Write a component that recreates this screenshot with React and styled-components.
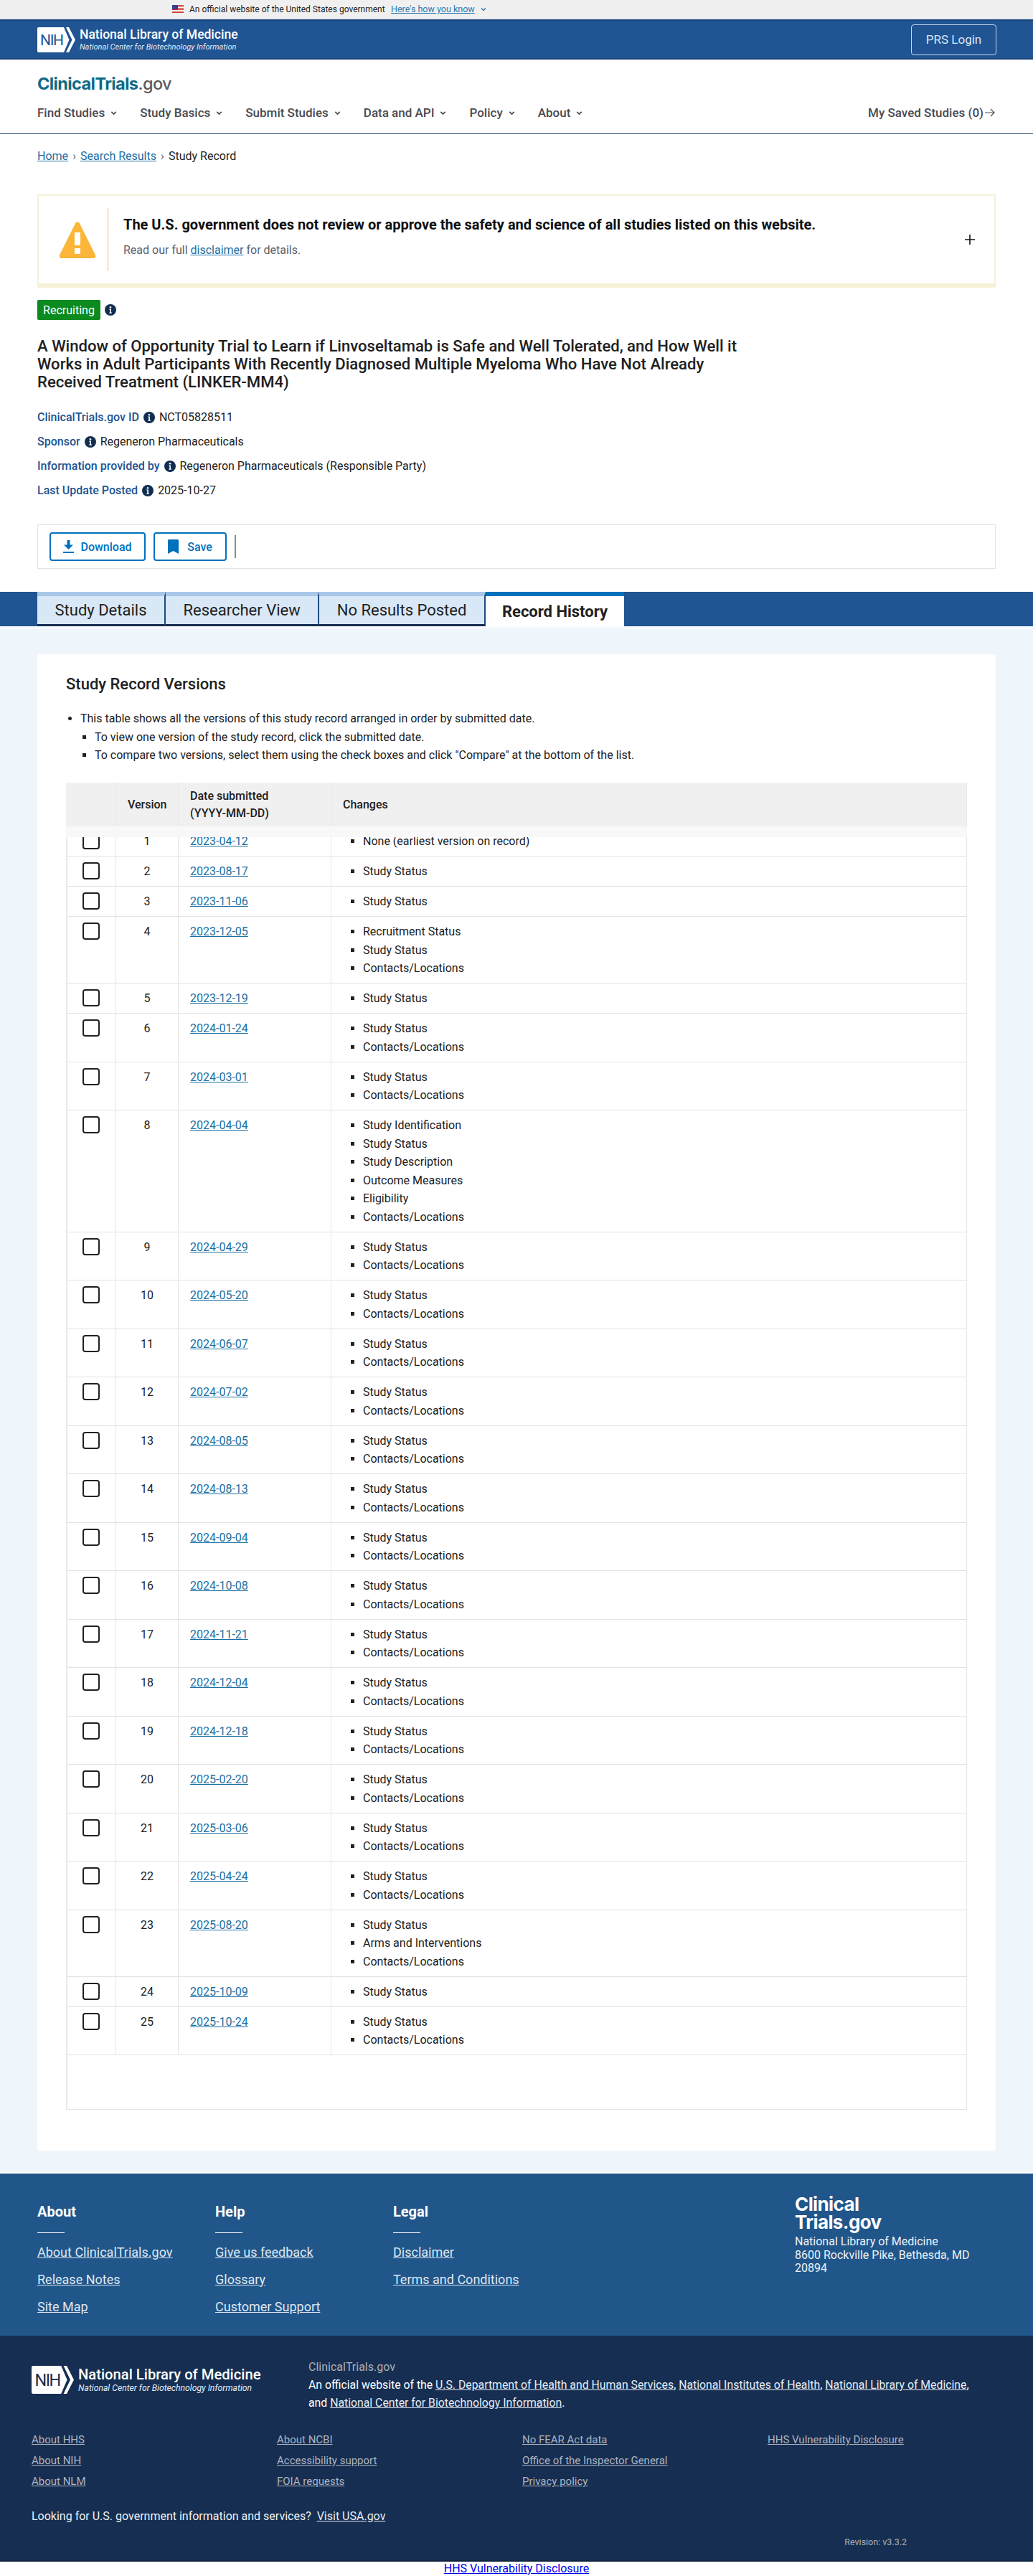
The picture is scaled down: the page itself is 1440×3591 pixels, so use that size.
import styled, { createGlobalStyle } from "styled-components";

const GlobalStyle = createGlobalStyle`
  html, body {
    margin: 0;
    padding: 0;
    background: #fff;
    color: #212121;
    font-family: Roboto, "Liberation Sans", sans-serif;
    font-size: 16px;
  }
  * { box-sizing: border-box; }
`;

const S = "Study Status";
const C = "Contacts/Locations";

const versions = [
  ["2023-04-12", ["None (earliest version on record)"]],
  ["2023-08-17", [S]],
  ["2023-11-06", [S]],
  ["2023-12-05", ["Recruitment Status", S, C]],
  ["2023-12-19", [S]],
  ["2024-01-24", [S, C]],
  ["2024-03-01", [S, C]],
  ["2024-04-04", ["Study Identification", S, "Study Description", "Outcome Measures", "Eligibility", C]],
  ["2024-04-29", [S, C]],
  ["2024-05-20", [S, C]],
  ["2024-06-07", [S, C]],
  ["2024-07-02", [S, C]],
  ["2024-08-05", [S, C]],
  ["2024-08-13", [S, C]],
  ["2024-09-04", [S, C]],
  ["2024-10-08", [S, C]],
  ["2024-11-21", [S, C]],
  ["2024-12-04", [S, C]],
  ["2024-12-18", [S, C]],
  ["2025-02-20", [S, C]],
  ["2025-03-06", [S, C]],
  ["2025-04-24", [S, C]],
  ["2025-08-20", [S, "Arms and Interventions", C]],
  ["2025-10-09", [S]],
  ["2025-10-24", [S, C]],
];

const navItems = ["Find Studies", "Study Basics", "Submit Studies", "Data and API", "Policy", "About"];

const footerColumns = [
  ["About", ["About ClinicalTrials.gov", "Release Notes", "Site Map"]],
  ["Help", ["Give us feedback", "Glossary", "Customer Support"]],
  ["Legal", ["Disclaimer", "Terms and Conditions"]],
];

const govLinks = [
  ["About HHS", "About NIH", "About NLM"],
  ["About NCBI", "Accessibility support", "FOIA requests"],
  ["No FEAR Act data", "Office of the Inspector General", "Privacy policy"],
  ["HHS Vulnerability Disclosure"],
];

function Chevron({ size = 9, color = "#4a4a52" }) {
  return (
    <svg width={size} height={size} viewBox="0 0 10 10" fill="none">
      <path d="M1.5 3.2 5 6.8l3.5-3.6" stroke={color} strokeWidth="1.9" />
    </svg>
  );
}

function InfoIcon() {
  return (
    <svg width="16" height="16" viewBox="0 0 16 16">
      <circle cx="8" cy="8" r="8" fill="#112e51" />
      <circle cx="8" cy="4.3" r="1.3" fill="#fff" />
      <path d="M6.4 6.6h2.5v5h1v1.2H6.3v-1.2h1v-3.8h-.9z" fill="#fff" />
    </svg>
  );
}

function NihLogo({ height, dark }) {
  return (
    <svg height={height} viewBox="0 0 53 35">
      <path d="M2 0h35l7.5 17.5L37 35H2a2 2 0 0 1-2-2V2a2 2 0 0 1 2-2z" fill="#fff" />
      <path d="M40 0h4l9 17.5L44 35h-4l8.5-17.5z" fill="#fff" />
      <text x="4" y="25" fontFamily="Roboto, sans-serif" fontSize="21" textLength="33" fill={dark ? "#162e51" : "#205493"}>
        NIH
      </text>
    </svg>
  );
}

function Flag() {
  return (
    <svg width="16" height="11" viewBox="0 0 16 11">
      <rect width="16" height="11" fill="#fff" />
      {[0, 2, 4, 6, 8, 10].map((y) => (
        <rect key={y} y={y} width="16" height="1" fill="#c9342b" />
      ))}
      <rect width="8" height="6" fill="#3b3f8f" />
    </svg>
  );
}

export default function App() {
  return (
    <>
      <GlobalStyle />
      <GovBanner>
        <Flag />
        <GovText>An official website of the United States government</GovText>
        <GovLink href="#">Here's how you know</GovLink>
        <Chevron size={8} color="#2a7ab0" />
      </GovBanner>

      <NlmBar>
        <NlmBrand>
          <NihLogo height={35} />
          <NlmText>
            <NlmTitle>National Library of Medicine</NlmTitle>
            <NlmSub>National Center for Biotechnology Information</NlmSub>
          </NlmText>
        </NlmBrand>
        <PrsButton>PRS Login</PrsButton>
      </NlmBar>

      <SiteHeader>
        <SiteLogo>
          ClinicalTrials<span>.gov</span>
        </SiteLogo>
        <Nav>
          {navItems.map((item) => (
            <NavItem key={item}>
              {item}
              <Chevron />
            </NavItem>
          ))}
          <SavedLink>
            My Saved Studies (0)
            <svg width="16" height="14" viewBox="0 0 16 14" fill="none">
              <path d="M1 7h13M9 2l5 5-5 5" stroke="#4a4a52" strokeWidth="1.2" />
            </svg>
          </SavedLink>
        </Nav>
      </SiteHeader>

      <Content>
        <Breadcrumb>
          <TextLink href="#">Home</TextLink>
          <Crumb>›</Crumb>
          <TextLink href="#">Search Results</TextLink>
          <Crumb>›</Crumb>
          <span>Study Record</span>
        </Breadcrumb>

        <Disclaimer>
          <WarningWrap>
            <svg width="52" height="52" viewBox="0 0 52 52">
              <path
                d="M23 3.5c1.400-2.600 4.600-2.600 6 0l22 44c.9 2-.3 4.500-2.500 4.500h-45c-2.200 0-3.400-2.500-2.500-4.500z"
                fill="#fbb538"
              />
              <rect x="22" y="16" width="8" height="18" fill="#fff" />
              <rect x="22" y="38" width="8" height="8" fill="#fff" />
            </svg>
          </WarningWrap>
          <DisclaimerBody>
            <DisclaimerTitle>
              The U.S. government does not review or approve the safety and science of all studies listed on this website.
            </DisclaimerTitle>
            <DisclaimerNote>
              Read our full <TextLink href="#">disclaimer</TextLink> for details.
            </DisclaimerNote>
          </DisclaimerBody>
          <svg width="14" height="14" viewBox="0 0 14 14">
            <path d="M6.200 0h1.600v6.200H14v1.600H7.800V14H6.200V7.800H0V6.200h6.200z" fill="#111" />
          </svg>
        </Disclaimer>

        <StatusRow>
          <Badge>Recruiting</Badge>
          <InfoIcon />
        </StatusRow>

        <StudyTitle>
          A Window of Opportunity Trial to Learn if Linvoseltamab is Safe and Well Tolerated, and How Well it Works in
          Adult Participants With Recently Diagnosed Multiple Myeloma Who Have Not Already Received Treatment
          (LINKER-MM4)
        </StudyTitle>

        <MetaList>
          <MetaRow>
            <MetaLabel>ClinicalTrials.gov ID</MetaLabel>
            <InfoIcon />
            <span>NCT05828511</span>
          </MetaRow>
          <MetaRow>
            <MetaLabel>Sponsor</MetaLabel>
            <InfoIcon />
            <span>Regeneron Pharmaceuticals</span>
          </MetaRow>
          <MetaRow>
            <MetaLabel>Information provided by</MetaLabel>
            <InfoIcon />
            <span>Regeneron Pharmaceuticals (Responsible Party)</span>
          </MetaRow>
          <MetaRow>
            <MetaLabel>Last Update Posted</MetaLabel>
            <InfoIcon />
            <span>2025-10-27</span>
          </MetaRow>
        </MetaList>

        <ActionBar>
          <ActionButton $width={134} $gap={9}>
            <svg width="15" height="18" viewBox="0 0 15 18">
              <path d="M5.500 0h4v6.500H14L7.500 13 1 6.500h4.500z" fill="#0071bc" />
              <rect y="16" width="15" height="2" fill="#0071bc" />
            </svg>
            Download
          </ActionButton>
          <ActionButton $width={102} $gap={12}>
            <svg width="15" height="20" viewBox="0 0 15 20">
              <path d="M1.500 0h12A1.500 1.500 0 0 1 15 1.500V20l-7.500-4L0 20V1.500A1.500 1.500 0 0 1 1.500 0z" fill="#0071bc" />
            </svg>
            Save
          </ActionButton>
          <ActionDivider />
        </ActionBar>
      </Content>

      <TabBand>
        <Tab>Study Details</Tab>
        <Tab>Researcher View</Tab>
        <Tab>No Results Posted</Tab>
        <Tab $active>Record History</Tab>
      </TabBand>

      <Main>
        <Card>
          <CardTitle>Study Record Versions</CardTitle>
          <IntroList>
            <li>
              This table shows all the versions of this study record arranged in order by submitted date.
              <IntroNested>
                <li>To view one version of the study record, click the submitted date.</li>
                <li>To compare two versions, select them using the check boxes and click "Compare" at the bottom of the list.</li>
              </IntroNested>
            </li>
          </IntroList>

          <TableWrap>
            <VersionTable>
              <colgroup>
                <col width="70" />
                <col width="87" />
                <col width="213" />
                <col />
              </colgroup>
              <thead>
                <tr>
                  <Th />
                  <Th $center>Version</Th>
                  <Th>
                    Date submitted
                    <br />
                    (YYYY-MM-DD)
                  </Th>
                  <Th>Changes</Th>
                </tr>
              </thead>
              <tbody>
                {versions.map(([date, changes], i) => (
                  <tr key={date}>
                    <Td>
                      <CheckBox />
                    </Td>
                    <Td $center>{i + 1}</Td>
                    <Td>
                      <TextLink href="#">{date}</TextLink>
                    </Td>
                    <Td>
                      <ChangeList>
                        {changes.map((c) => (
                          <li key={c}>{c}</li>
                        ))}
                      </ChangeList>
                    </Td>
                  </tr>
                ))}
                <tr>
                  <EmptyCell colSpan={4} />
                </tr>
              </tbody>
            </VersionTable>
            <HeaderFade />
          </TableWrap>
        </Card>
      </Main>

      <AboutFooter>
        {footerColumns.map(([title, links]) => (
          <FooterColumn key={title}>
            <FooterHeading>{title}</FooterHeading>
            <FooterRule />
            {links.map((l) => (
              <FooterLink href="#" key={l}>
                {l}
              </FooterLink>
            ))}
          </FooterColumn>
        ))}
        <FooterAddress>
          <FooterLogo>
            Clinical
            <br />
            Trials.gov
          </FooterLogo>
          <AddressText>
            National Library of Medicine
            <br />
            8600 Rockville Pike, Bethesda, MD
            <br />
            20894
          </AddressText>
        </FooterAddress>
      </AboutFooter>

      <GovFooter>
        <GovTop>
          <GovBrand>
            <NihLogo height={39} dark />
            <NlmText>
              <GovBrandTitle>National Library of Medicine</GovBrandTitle>
              <GovBrandSub>National Center for Biotechnology Information</GovBrandSub>
            </NlmText>
          </GovBrand>
          <GovAbout>
            <GovSiteName>ClinicalTrials.gov</GovSiteName>
            <GovLine>
              An official website of the <LightLink href="#">U.S. Department of Health and Human Services</LightLink>,{" "}
              <LightLink href="#">National Institutes of Health</LightLink>,{" "}
              <LightLink href="#">National Library of Medicine</LightLink>,
            </GovLine>
            <GovLine>
              and <LightLink href="#">National Center for Biotechnology Information</LightLink>.
            </GovLine>
          </GovAbout>
        </GovTop>
        <GovLinks>
          {govLinks.map((col) => (
            <GovLinkColumn key={col[0]}>
              {col.map((l) => (
                <MutedLink href="#" key={l}>
                  {l}
                </MutedLink>
              ))}
            </GovLinkColumn>
          ))}
        </GovLinks>
        <UsaGov>
          Looking for U.S. government information and services? &nbsp;<LightLink href="#">Visit USA.gov</LightLink>
        </UsaGov>
        <Revision>Revision: v3.3.2</Revision>
      </GovFooter>

      <BottomLink>
        <a href="#">HHS Vulnerability Disclosure</a>
      </BottomLink>
    </>
  );
}

const GovBanner = styled.div`
  height: 27px;
  padding: 0 0 1px 240px;
  display: flex;
  align-items: center;
  gap: 8px;
  background: #f0f0f0;
  border-bottom: 1px solid #cfe2f0;
`;

const GovText = styled.span`
  color: #212121;
  width: 273px;
  font-size: 12px;
  white-space: nowrap;
`;

const GovLink = styled.a`
  color: #2a7ab0;
  font-size: 12.5px;
  text-decoration: underline;
`;

const NlmBar = styled.div`
  height: 56px;
  padding: 0 51px 0 52px;
  display: flex;
  align-items: center;
  justify-content: space-between;
  background: #205493;
  border-top: 2px solid #1b4578;
  border-bottom: 2px solid #1b4578;
`;

const NlmBrand = styled.div`
  display: flex;
  align-items: center;
  gap: 6px;
`;

const NlmText = styled.div`
  display: flex;
  flex-direction: column;
  color: #fff;
`;

const NlmTitle = styled.div`
  font-size: 17.5px;
  font-weight: 500;
  line-height: 21px;
  white-space: nowrap;
`;

const NlmSub = styled.div`
  font-size: 11px;
  font-style: italic;
  line-height: 13px;
  color: #e4ecf5;
  white-space: nowrap;
`;

const PrsButton = styled.button`
  width: 119px;
  height: 43px;
  background: transparent;
  border: 1px solid #c5d9ef;
  border-radius: 4px;
  color: #d9e8f6;
  font-family: inherit;
  font-size: 17px;
`;

const SiteHeader = styled.header`
  height: 104px;
  padding: 19px 52px 0;
  border-bottom: 1px solid #1f3f66;
`;

const SiteLogo = styled.div`
  font-family: Inter, Roboto, sans-serif;
  font-size: 23.5px;
  font-weight: 700;
  line-height: 30px;
  letter-spacing: -0.6px;
  color: #0e6a86;
  span {
    color: #5b5b63;
    font-weight: 500;
  }
`;

const Nav = styled.nav`
  margin-top: 13px;
  display: flex;
  align-items: center;
  gap: 32px;
`;

const NavItem = styled.div`
  display: flex;
  align-items: center;
  gap: 8px;
  font-size: 17px;
  font-weight: 500;
  line-height: 24px;
  color: #4a4a52;
`;

const SavedLink = styled(NavItem)`
  margin-left: auto;
  gap: 1px;
  line-height: 22px;
`;

const Content = styled.div`
  padding: 0 52px;
`;

const Breadcrumb = styled.div`
  padding-top: 19px;
  height: 84px;
  line-height: 24px;
  display: flex;
  align-items: flex-start;
`;

const Crumb = styled.span`
  width: 17px;
  text-align: center;
  color: #5b616b;
`;

const TextLink = styled.a`
  color: #1a6fa3;
  text-decoration: underline;
`;

const Disclaimer = styled.section`
  height: 130px;
  display: flex;
  align-items: center;
  padding-right: 27px;
  border: 2px solid #f6f2d8;
  border-bottom-width: 6px;
`;

const WarningWrap = styled.div`
  width: 97px;
  height: 88px;
  padding-left: 28px;
  display: flex;
  align-items: center;
  border-right: 1px solid #e6b95f;
`;

const DisclaimerBody = styled.div`
  flex: 1;
  padding: 0 0 9px 21px;
`;

const DisclaimerTitle = styled.div`
  font-size: 20px;
  font-weight: 700;
  line-height: 28px;
  color: #111;
`;

const DisclaimerNote = styled.div`
  margin-top: 10px;
  line-height: 24px;
  color: #5b616b;
`;

const StatusRow = styled.div`
  margin-top: 17px;
  display: flex;
  align-items: center;
  gap: 6px;
`;

const Badge = styled.span`
  width: 88px;
  height: 28px;
  display: flex;
  align-items: center;
  justify-content: center;
  border-radius: 2px;
  background: #0a8a1f;
  color: #fff;
  font-size: 16px;
`;

const StudyTitle = styled.h1`
  margin: 24px 0 0;
  width: 1000px;
  font-size: 22.1px;
  font-weight: 500;
  line-height: 25px;
  color: #212121;
`;

const MetaList = styled.div`
  margin-top: 25px;
  display: flex;
  flex-direction: column;
  gap: 10px;
`;

const MetaRow = styled.div`
  height: 24px;
  display: flex;
  align-items: center;
  gap: 6px;
  line-height: 24px;
  color: #212121;
`;

const MetaLabel = styled.span`
  color: #205493;
  font-weight: 500;
`;

const ActionBar = styled.div`
  margin-top: 35px;
  height: 62px;
  padding-left: 16px;
  display: flex;
  align-items: center;
  gap: 11px;
  border: 1px solid #e4e4e4;
`;

const ActionButton = styled.button`
  width: ${(p) => p.$width}px;
  height: 40px;
  display: flex;
  align-items: center;
  justify-content: center;
  gap: ${(p) => p.$gap}px;
  background: #fff;
  border: 2px solid #0071bc;
  border-radius: 4px;
  color: #0071bc;
  font-family: inherit;
  font-size: 16px;
  font-weight: 500;
`;

const ActionDivider = styled.div`
  width: 2px;
  height: 32px;
  background: #8a8a8a;
`;

const TabBand = styled.div`
  margin-top: 32px;
  height: 48px;
  padding-left: 52px;
  display: flex;
  background: #205493;
`;

const Tab = styled.div`
  padding: 0 ${(p) => (p.$active ? "23px" : "24.5px")};
  height: 48px;
  display: flex;
  align-items: center;
  justify-content: center;
  background: ${(p) => (p.$active ? "#fff" : "#d9e8f6")};
  border-top: 6px solid ${(p) => (p.$active ? "#0071bc" : "#a9c7e8")};
  border-right: ${(p) => (p.$active ? "0" : "2px solid #1f4a80")};
  border-bottom: ${(p) => (p.$active ? "0" : "3px solid #162e51")};
  color: #212121;
  font-size: 22px;
  font-weight: ${(p) => (p.$active ? 700 : 400)};
`;

const Main = styled.main`
  padding: 35px 52px 29px;
  background: #eef5fb;
  border-top: 4px solid #f6f9fc;
  border-bottom: 3px solid #fbfcfe;
`;

const Card = styled.section`
  height: 2086px;
  padding: 28px 40px 0;
  background: #fff;
  border-radius: 4px;
`;

const CardTitle = styled.h2`
  margin: 0;
  font-size: 22px;
  font-weight: 500;
  line-height: 28px;
  color: #212121;
`;

const IntroList = styled.ul`
  margin: 22px 0 0;
  padding: 0 0 0 20px;
  height: 101px;
  line-height: 24px;
  li + li {
    margin-top: 1.5px;
  }
`;

const IntroNested = styled.ul`
  margin: 1.5px 0 0;
  padding-left: 20px;
  list-style: square;
`;

const TableWrap = styled.div`
  position: relative;
`;

const VersionTable = styled.table`
  width: 1256px;
  table-layout: fixed;
  border-collapse: separate;
  border-spacing: 0;
`;

const Th = styled.th`
  height: 61px;
  padding: 0 16px;
  background: #f0f0f0;
  border-right: 1px solid #e9e9e9;
  font-size: 16px;
  font-weight: 500;
  line-height: 24px;
  color: #212121;
  text-align: ${(p) => (p.$center ? "center" : "left")};
`;

const Td = styled.td`
  padding: 9px 16px 8px;
  vertical-align: top;
  line-height: 24px;
  border-bottom: 1px solid #e2e2e2;
  border-right: 1px solid #e6e6e6;
  text-align: ${(p) => (p.$center ? "center" : "left")};
  &:first-child {
    border-left: 2px solid #e9e9e9;
    padding: 8px 0 0 21px;
  }
`;

const CheckBox = styled.div`
  width: 24px;
  height: 24px;
  border: 2px solid #212121;
  border-radius: 4px;
  background: #fff;
`;

const ChangeList = styled.ul`
  margin: 0;
  padding: 0 0 0 28px;
  list-style: square;
  li + li {
    margin-top: 1.5px;
  }
`;

const EmptyCell = styled.td`
  height: 76px;
  border-left: 2px solid #e9e9e9;
  border-right: 1px solid #e6e6e6;
  border-bottom: 1px solid #e2e2e2;
`;

const HeaderFade = styled.div`
  position: absolute;
  top: 61px;
  left: 0;
  right: 0;
  height: 15px;
  background: #f8f8f8;
`;

const AboutFooter = styled.footer`
  height: 226px;
  padding: 30px 52px 0;
  display: flex;
  background: #21568a;
  color: #fff;
`;

const FooterColumn = styled.div`
  width: 248px;
  padding-top: 10px;
  display: flex;
  flex-direction: column;
  align-items: flex-start;
`;

const FooterHeading = styled.div`
  font-size: 20px;
  font-weight: 700;
  line-height: 26px;
`;

const FooterRule = styled.div`
  margin: 16px 0 1px;
  width: 38px;
  height: 1px;
  background: #fff;
`;

const FooterLink = styled.a`
  margin-top: 14px;
  font-size: 18px;
  line-height: 24px;
  color: #dfe7f1;
  text-decoration: underline;
`;

const FooterAddress = styled.div`
  margin-left: auto;
  width: 280px;
`;

const FooterLogo = styled.div`
  font-family: Inter, Roboto, sans-serif;
  font-size: 26px;
  font-weight: 700;
  line-height: 25px;
  letter-spacing: -0.6px;
`;

const AddressText = styled.div`
  margin-top: 6px;
  font-size: 16px;
  line-height: 18.5px;
  color: #eef2f7;
`;

const GovFooter = styled.footer`
  height: 315px;
  padding: 31px 44px 0;
  background: #162e51;
  border-bottom: 2px solid #0f2440;
  color: #fff;
`;

const GovTop = styled.div`
  display: flex;
`;

const GovBrand = styled.div`
  width: 386px;
  padding-top: 11px;
  display: flex;
  align-items: flex-start;
  gap: 6px;
`;

const GovBrandTitle = styled.div`
  font-size: 20.2px;
  font-weight: 500;
  line-height: 24px;
  white-space: nowrap;
`;

const GovBrandSub = styled.div`
  font-size: 12.2px;
  font-style: italic;
  line-height: 15px;
  color: #e4ecf5;
  white-space: nowrap;
`;

const GovAbout = styled.div`
  width: 940px;
  font-size: 15.8px;
  line-height: 25px;
`;

const GovLine = styled.div`
  white-space: nowrap;
`;

const GovSiteName = styled.div`
  font-size: 16px;
  color: #aeb0b5;
`;

const LightLink = styled.a`
  color: #e6ecf4;
  text-decoration: underline;
`;

const GovLinks = styled.div`
  margin-top: 25px;
  display: grid;
  grid-template-columns: repeat(4, 342px);
`;

const GovLinkColumn = styled.div`
  display: flex;
  flex-direction: column;
  align-items: flex-start;
`;

const MutedLink = styled.a`
  font-size: 15px;
  line-height: 29px;
  color: #aeb4c0;
  text-decoration: underline;
`;

const UsaGov = styled.div`
  margin-top: 22px;
  line-height: 24px;
  color: #f1f1f1;
`;

const Revision = styled.div`
  margin-top: 15px;
  padding-right: 132px;
  font-size: 12.5px;
  line-height: 18px;
  color: #aeb0b5;
  text-align: right;
`;

const BottomLink = styled.div`
  height: 20px;
  line-height: 20px;
  text-align: center;
  a {
    color: #0000ee;
  }
`;
